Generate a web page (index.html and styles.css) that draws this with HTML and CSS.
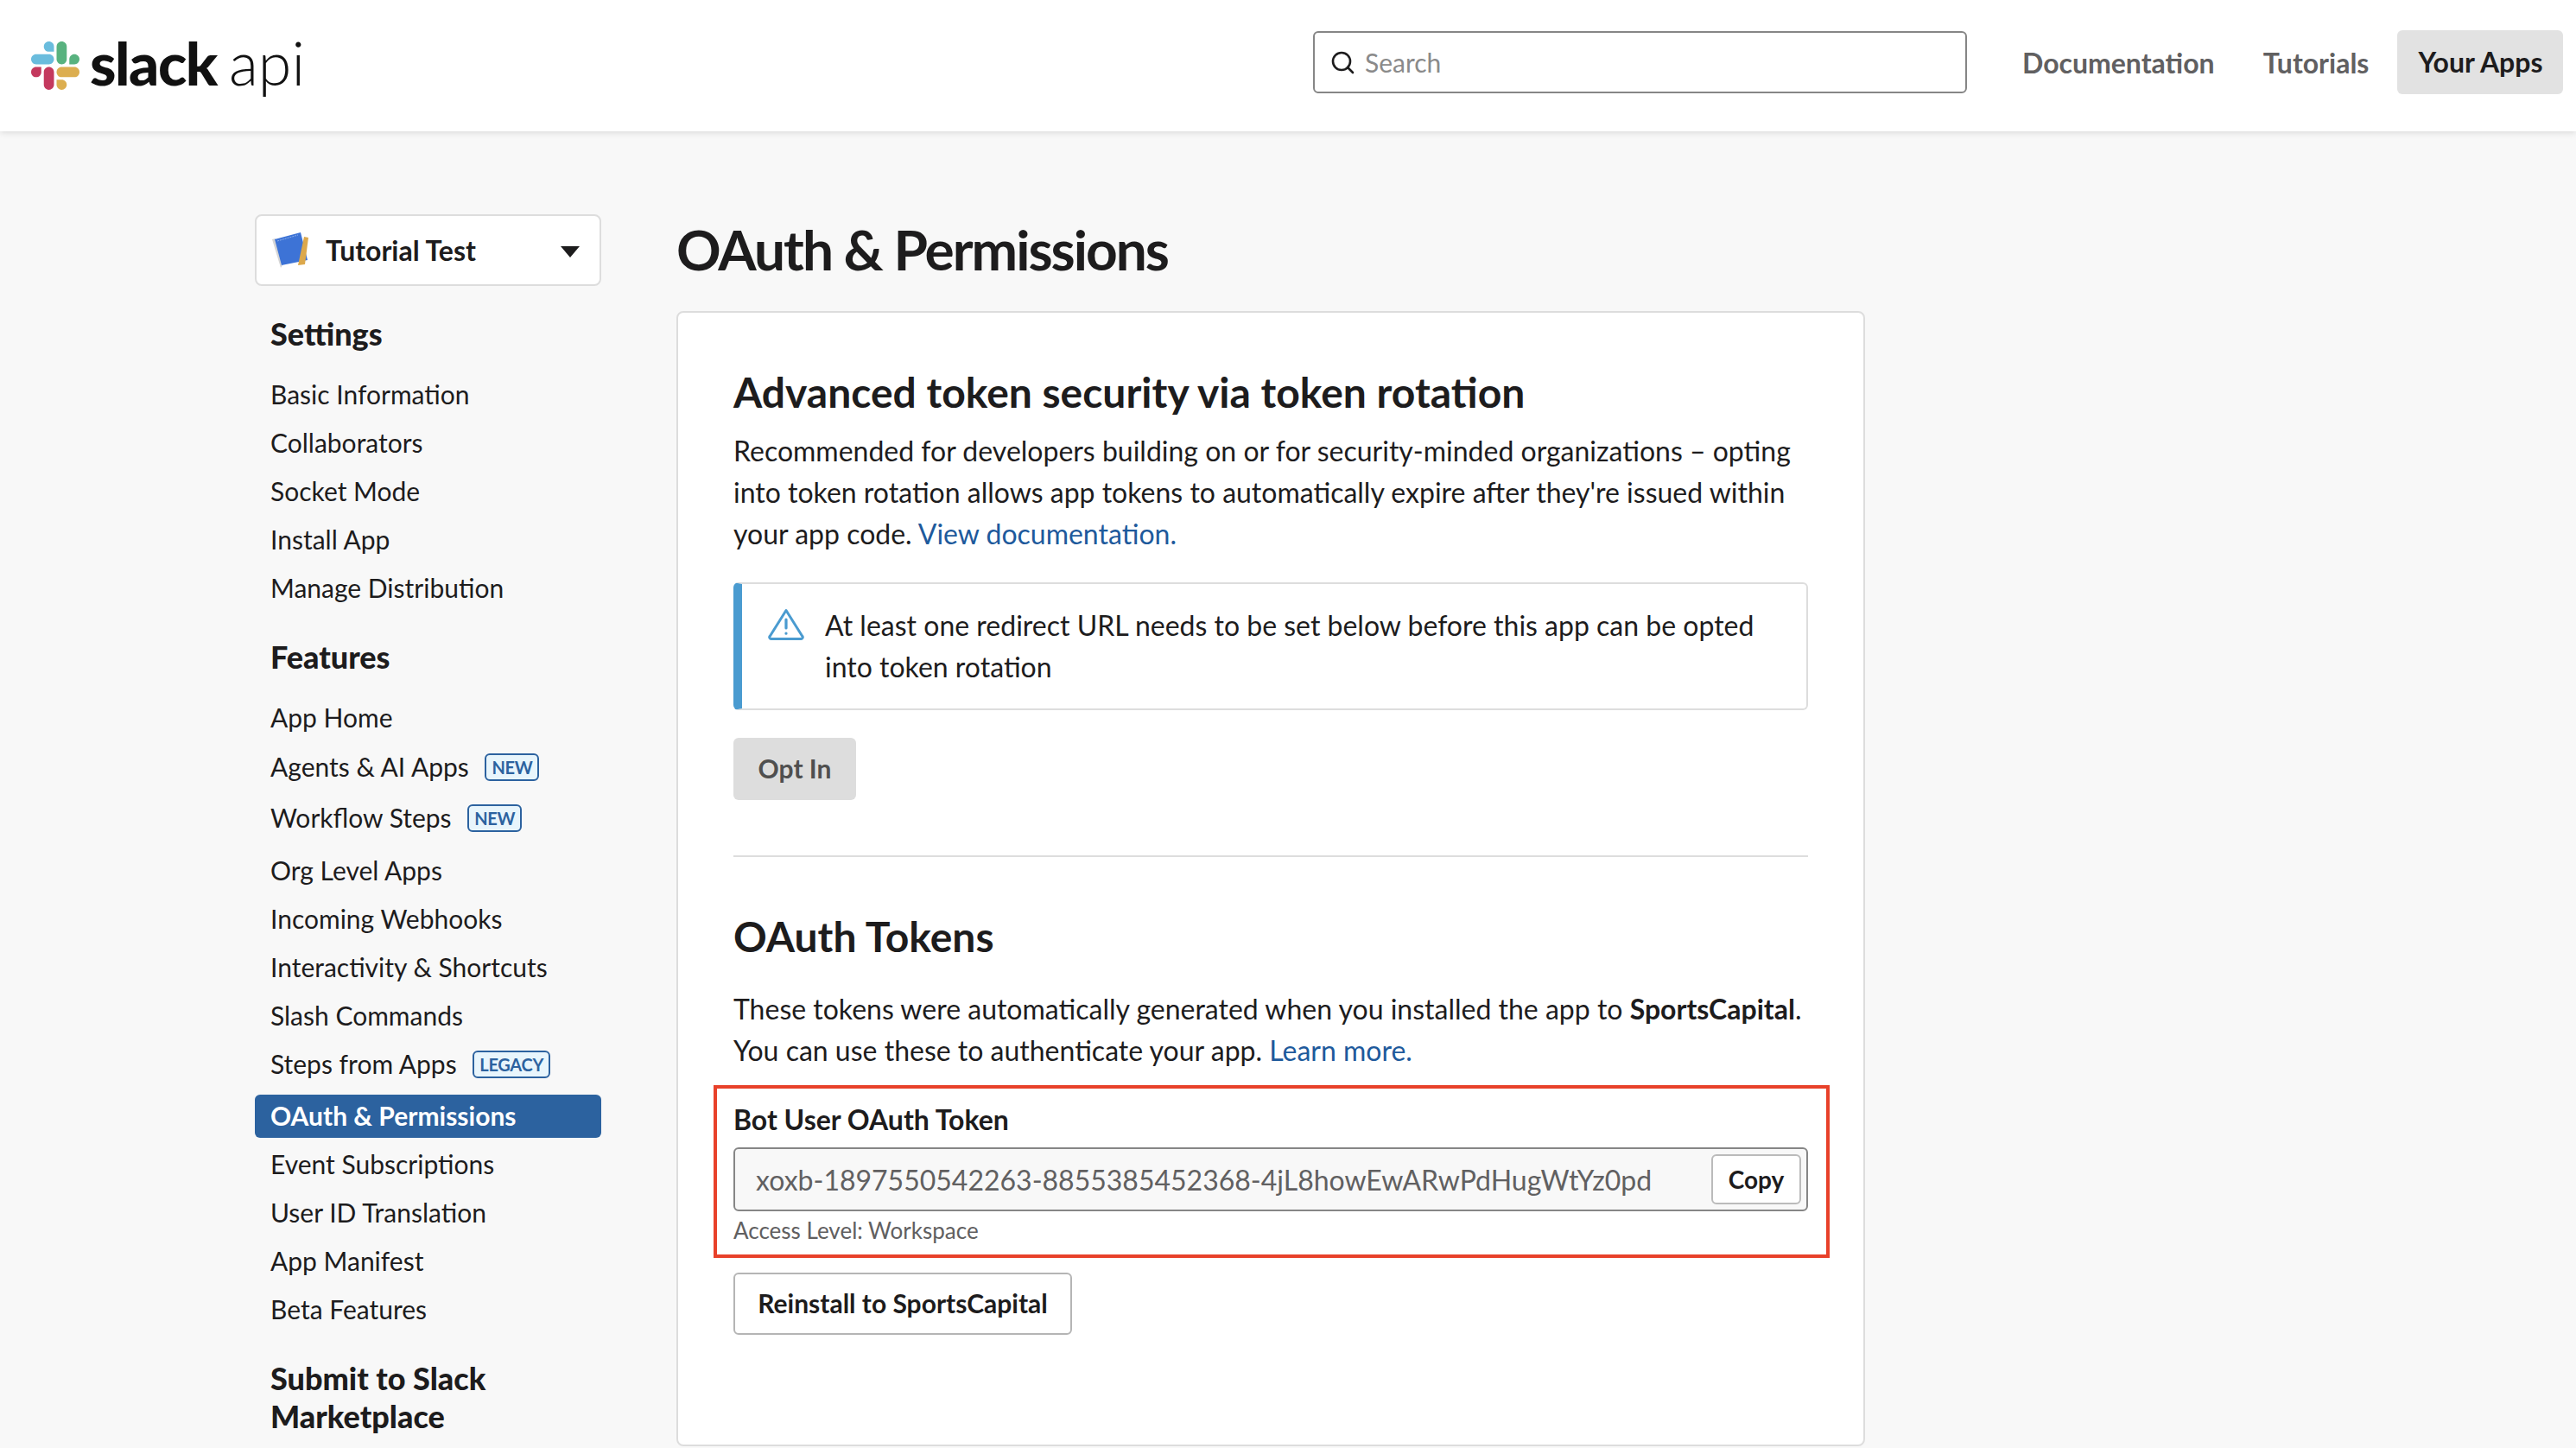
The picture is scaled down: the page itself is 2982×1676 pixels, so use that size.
FILE: index.html
```html
<!DOCTYPE html>
<html lang="en">
<head>
    <meta charset="UTF-8">
    <title>OAuth &amp; Permissions | Slack API</title>
    <link rel="stylesheet" href="styles.css">
</head>
<body>
    <header class="topbar">
        <a class="logo">
            <svg class="logo-mark" viewBox="73.6 73.6 122.8 122.8">
                <path fill="#c4395e" d="M99.4,151.2c0,7.1-5.8,12.9-12.9,12.9c-7.1,0-12.9-5.8-12.9-12.9c0-7.1,5.8-12.9,12.9-12.9h12.9V151.2z"/>
                <path fill="#c4395e" d="M105.9,151.2c0-7.1,5.8-12.9,12.9-12.9s12.9,5.8,12.9,12.9v32.3c0,7.1-5.8,12.9-12.9,12.9s-12.9-5.8-12.9-12.9V151.2z"/>
                <path fill="#6abcdd" d="M118.8,99.4c-7.1,0-12.9-5.8-12.9-12.9c0-7.1,5.8-12.9,12.9-12.9s12.9,5.8,12.9,12.9v12.9H118.8z"/>
                <path fill="#6abcdd" d="M118.8,105.9c7.1,0,12.9,5.8,12.9,12.9s-5.8,12.9-12.9,12.9H86.5c-7.1,0-12.9-5.8-12.9-12.9s5.8-12.9,12.9-12.9H118.8z"/>
                <path fill="#58b27f" d="M170.6,118.8c0-7.1,5.8-12.9,12.9-12.9c7.1,0,12.9,5.8,12.9,12.9s-5.8,12.9-12.9,12.9h-12.9V118.8z"/>
                <path fill="#58b27f" d="M164.1,118.8c0,7.1-5.8,12.9-12.9,12.9c-7.1,0-12.9-5.8-12.9-12.9V86.5c0-7.1,5.8-12.9,12.9-12.9c7.1,0,12.9,5.8,12.9,12.9V118.8z"/>
                <path fill="#dcae50" d="M151.2,170.6c7.1,0,12.9,5.8,12.9,12.9c0,7.1-5.8,12.9-12.9,12.9c-7.1,0-12.9-5.8-12.9-12.9v-12.9H151.2z"/>
                <path fill="#dcae50" d="M151.2,164.1c-7.1,0-12.9-5.8-12.9-12.9c0-7.1,5.8-12.9,12.9-12.9h32.3c7.1,0,12.9,5.8,12.9,12.9c0,7.1-5.8,12.9-12.9,12.9H151.2z"/>
            </svg>
            <span class="logo-slack">slack</span>
            <span class="logo-api">api</span>
        </a>
        <div class="search">
            <svg class="search-icon" viewBox="0 0 28 28"><circle cx="13" cy="13" r="10" fill="none" stroke="#1d1c1d" stroke-width="2.6"/><path d="M20 20l6 6" stroke="#1d1c1d" stroke-width="2.6" stroke-linecap="round"/></svg>
            <span>Search</span>
        </div>
        <nav class="topnav">
            <a>Documentation</a>
            <a>Tutorials</a>
            <a class="current">Your Apps</a>
        </nav>
    </header>

    <div class="page">
        <aside class="sidebar">
            <div class="app-select">
                <svg class="app-icon" viewBox="0 0 44 42">
                    <path fill="#d5d5d5" d="M0 8l4-1 8 31-2 3z"/>
                    <path fill="#3d73d6" d="M3 8L33 0l8 32-30 6z"/>
                    <path fill="none" stroke="#9dbcf0" stroke-width=".8" stroke-dasharray="2 1" d="M6 10l24-7"/>
                    <path fill="#dca84c" d="M37 5l5 1-4 31-8 1z"/>
                </svg>
                <span class="app-name">Tutorial Test</span>
                <span class="caret"></span>
            </div>

            <h3 class="nav-title">Settings</h3>
            <ul class="nav-list">
                <li>Basic Information</li>
                <li>Collaborators</li>
                <li>Socket Mode</li>
                <li>Install App</li>
                <li>Manage Distribution</li>
            </ul>

            <h3 class="nav-title">Features</h3>
            <ul class="nav-list">
                <li>App Home</li>
                <li class="agents">Agents &amp; AI Apps <span class="tag">NEW</span></li>
                <li class="workflow">Workflow Steps <span class="tag">NEW</span></li>
                <li>Org Level Apps</li>
                <li>Incoming Webhooks</li>
                <li>Interactivity &amp; Shortcuts</li>
                <li>Slash Commands</li>
                <li>Steps from Apps <span class="tag">LEGACY</span></li>
                <li class="active">OAuth &amp; Permissions</li>
                <li>Event Subscriptions</li>
                <li>User ID Translation</li>
                <li>App Manifest</li>
                <li>Beta Features</li>
            </ul>

            <h3 class="nav-title">Submit to Slack Marketplace</h3>
        </aside>

        <main class="content">
            <h1>OAuth &amp; Permissions</h1>
            <section class="card">
                <h2>Advanced token security via token rotation</h2>
                <p class="lead">Recommended for developers building on or for security-minded organizations – opting into token rotation allows app tokens to automatically expire after they're issued within your app code. <a>View documentation.</a></p>

                <div class="alert">
                    <svg class="alert-icon" viewBox="0 0 42 38">
                        <path fill="none" stroke="#4a9bd0" stroke-width="3" stroke-linejoin="round" d="M21 2.5L39.5 32a2 2 0 0 1-1.7 3.500H4.200A2 2 0 0 1 2.500 32z"/>
                        <path stroke="#4a9bd0" stroke-width="3.200" stroke-linecap="round" d="M21 13v10M21 29v.2"/>
                    </svg>
                    <p>At least one redirect URL needs to be set below before this app can be opted into token rotation</p>
                </div>

                <button class="btn btn-disabled">Opt In</button>

                <hr>

                <h2 class="tokens-title">OAuth Tokens</h2>
                <p class="tokens-text">These tokens were automatically generated when you installed the app to <b>SportsCapital</b>. You can use these to authenticate your app. <a>Learn more.</a></p>

                <div class="token-box">
                    <label>Bot User OAuth Token</label>
                    <div class="token-field">
                        <span class="token-value">xoxb-1897550542263-8855385452368-4jL8howEwARwPdHugWtYz0pd</span>
                        <button class="copy">Copy</button>
                    </div>
                    <small>Access Level: Workspace</small>
                </div>

                <button class="btn btn-outline">Reinstall to SportsCapital</button>
            </section>
        </main>
    </div>
</body>
</html>
```

FILE: styles.css
```css
* {
    margin: 0;
    padding: 0;
    box-sizing: border-box;
}

html, body {
    height: 1676px;
    overflow: hidden;
}

body {
    background: #f8f8f8;
    font-family: Lato, "Liberation Sans", sans-serif;
    color: #1d1c1d;
}

a {
    color: #1e5a9c;
}

/* top bar */
.topbar {
    height: 152px;
    display: flex;
    align-items: center;
    background: #fff;
    box-shadow: 0 1px 8px rgba(0, 0, 0, 0.14);
    padding: 0 15px 8px 36px;
}

.logo {
    display: flex;
    align-items: center;
    color: #111;
    width: 1484px;
    margin-top: 8px;
}

.logo-mark {
    width: 56px;
    height: 56px;
    margin-right: 12px;
}

.logo-slack {
    font-size: 69px;
    font-weight: 900;
    letter-spacing: -1.5px;
    line-height: 1;
    margin-top: -8px;
}

.logo-api {
    font-size: 70px;
    font-weight: 300;
    line-height: 1;
    margin: -8px 0 0 14px;
}

.search {
    width: 757px;
    height: 72px;
    display: flex;
    align-items: center;
    gap: 12px;
    padding-left: 18px;
    background: #fff;
    border: 2px solid #868686;
    border-radius: 6px;
    font-size: 30px;
    color: #8a8a8a;
}

.search-icon {
    width: 28px;
    height: 28px;
}

.topnav {
    display: flex;
    align-items: center;
    margin-left: 64px;
    font-size: 32px;
    font-weight: 700;
    color: #616061;
}

.topnav a {
    color: inherit;
}

.topnav a + a {
    margin-left: 56px;
}

.topnav .current {
    margin-left: 33px;
    padding: 0 23px 0 24px;
    height: 74px;
    line-height: 74px;
    background: #e2e2e2;
    border-radius: 6px;
    color: #1d1c1d;
}

/* page columns */
.page {
    display: flex;
    gap: 87px;
    padding: 96px 0 0 295px;
}

.sidebar {
    width: 401px;
}

.app-select {
    height: 83px;
    display: flex;
    align-items: center;
    padding: 0 23px 0 18px;
    background: #fff;
    border: 2px solid #ddd;
    border-radius: 8px;
    margin-bottom: 33px;
}

.app-icon {
    width: 44px;
    height: 42px;
}

.app-name {
    flex: 1;
    margin-left: 18px;
    font-size: 32px;
    font-weight: 700;
    color: #1d1c1d;
}

.caret {
    width: 0;
    height: 0;
    border-left: 11px solid transparent;
    border-right: 11px solid transparent;
    border-top: 13px solid #1d1c1d;
    margin-top: 4px;
}

.nav-title {
    padding-left: 18px;
    font-size: 36px;
    line-height: 44px;
    font-weight: 900;
    margin-bottom: 20px;
}

.nav-list {
    list-style: none;
    margin-bottom: 30px;
}

.nav-list li {
    height: 56px;
    line-height: 56px;
    padding-left: 18px;
    font-size: 30px;
}

.nav-list .agents {
    height: 58px;
    line-height: 58px;
}

.nav-list .workflow {
    height: 63px;
    padding-top: 2px;
}

.nav-list .active {
    height: 50px;
    line-height: 48px;
    margin: 8px 0 2px;
    background: #2c629f;
    border-radius: 6px;
    color: #fff;
    font-weight: 700;
}

.tag {
    display: inline-block;
    height: 32px;
    line-height: 28px;
    margin-left: 11px;
    padding: 0 6px;
    vertical-align: 3px;
    font-size: 20px;
    font-weight: 700;
    letter-spacing: -0.3px;
    color: #2c629f;
    background: #e8f5fc;
    border: 2px solid #2c629f;
    border-radius: 6px;
}

/* main column */
.content {
    width: 1376px;
}

h1 {
    font-size: 64px;
    line-height: 72px;
    font-weight: 700;
    letter-spacing: -2px;
    margin: 0 0 12px;
    height: 100px;
    padding-top: 5px;
}

.card {
    height: 1314px;
    padding: 62px 64px 0;
    background: #fff;
    border: 2px solid #ddd;
    border-radius: 8px;
}

h2 {
    font-size: 48px;
    line-height: 60px;
    font-weight: 700;
    margin-bottom: 14px;
}

.lead, .tokens-text {
    font-size: 32px;
    line-height: 48px;
}

.alert {
    height: 148px;
    display: flex;
    gap: 24px;
    margin-top: 32px;
    padding: 24px 40px 0 30px;
    background: #fff;
    border: 2px solid #ddd;
    border-left: 10px solid #4a9bd0;
    border-radius: 6px;
    font-size: 32px;
    line-height: 48px;
}

.alert-icon {
    flex: none;
    width: 42px;
    height: 38px;
    margin-top: 4px;
}

.btn {
    display: block;
    height: 72px;
    padding-bottom: 2px;
    border-radius: 6px;
    font-family: inherit;
    font-size: 30px;
    font-weight: 700;
}

.btn-disabled {
    width: 142px;
    margin-top: 32px;
    border: none;
    background: #ddd;
    color: #4f4f4f;
}

hr {
    border: none;
    border-top: 2px solid #ddd;
    margin: 64px 0 0;
}

.tokens-title {
    margin: 62px 0 30px;
}

.token-box {
    margin: 16px -25px 0 -23px;
    padding: 16px 21px 0 19px;
    height: 200px;
    border: 4px solid #e8412a;
}

.token-box label {
    display: block;
    font-size: 32px;
    line-height: 40px;
    font-weight: 700;
    margin-bottom: 12px;
}

.token-field {
    height: 74px;
    display: flex;
    align-items: center;
    padding: 0 6px 0 24px;
    background: #f8f8f8;
    border: 2px solid #868686;
    border-radius: 6px;
}

.token-value {
    flex: 1;
    font-size: 32px;
    color: #616061;
}

.copy {
    width: 104px;
    height: 58px;
    background: #fff;
    border: 2px solid #bbb;
    border-radius: 6px;
    font-family: inherit;
    font-size: 28px;
    font-weight: 700;
    color: #1d1c1d;
}

.token-box small {
    display: block;
    margin-top: 6px;
    font-size: 26px;
    line-height: 32px;
    color: #616061;
}

.btn-outline {
    width: 392px;
    margin-top: 17px;
    background: #fff;
    border: 2px solid #b5b5b5;
    color: #1d1c1d;
}
```
